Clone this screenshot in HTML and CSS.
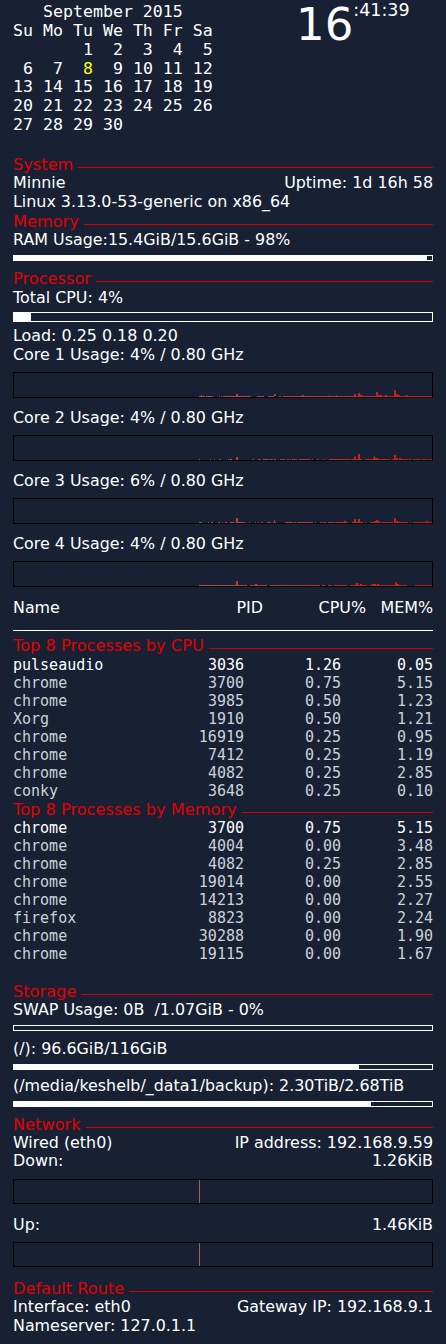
FILE: index.html
```html
<!DOCTYPE html>
<html>
<head>
<meta charset="utf-8">
<link rel="stylesheet" href="styles.css">
</head>
<body>
<div class="panel">
  <header class="top">
<pre class="cal">   September 2015
Su Mo Tu We Th Fr Sa
       1  2  3  4  5
 6  7  <span class="today">8</span>  9 10 11 12
13 14 15 16 17 18 19
20 21 22 23 24 25 26
27 28 29 30</pre>
    <div class="clock"><span class="hh">16</span><span class="ms">:41:39</span></div>
  </header>

  <h2 class="sec first">System</h2>
  <div class="row"><span>Minnie</span><span>Uptime: 1d 16h 58</span></div>
  <div class="ln">Linux 3.13.0-53-generic on x86_64</div>

  <h2 class="sec">Memory</h2>
  <div class="ln">RAM Usage:15.4GiB/15.6GiB - 98%</div>
  <div class="bar ram"><div class="fill" style="width:98.7%"></div></div>

  <h2 class="sec proc">Processor</h2>
  <div class="ln total">Total CPU: 4%</div>
  <div class="bar tall"><div class="fill" style="width:4%"></div></div>
  <div class="ln load">Load: 0.25 0.18 0.20</div>

  <div class="ln">Core 1 Usage: 4% / 0.80 GHz</div>
  <div class="graph">
    <svg viewBox="0 0 418 24" preserveAspectRatio="none" shape-rendering="crispEdges">
      <defs><linearGradient id="g" gradientUnits="userSpaceOnUse" x1="185" y1="0" x2="418" y2="0"><stop offset="0" stop-color="#b34a4a"/><stop offset="1" stop-color="#cc1414"/></linearGradient></defs>
      <path fill="url(#g)" d="M185 23h6v1h-6zM192 23h7v1h-7zM205 23h1v1h-1zM207 23h1v1h-1zM209 23h28v1h-28zM243 23h7v1h-7zM254 23h6v1h-6zM265 23h2v1h-2zM269 23h149v1h-149zM187 22h1v1h-1zM222 21h2v2h-2zM260 21h2v2h-2zM288 22h2v1h-2zM315 22h1v1h-1zM322 22h1v1h-1zM340 21h2v2h-2zM344 20h2v3h-2zM346 22h2v1h-2zM362 19h2v4h-2zM364 22h4v1h-4zM371 22h2v1h-2zM380 17h2v6h-2zM382 21h2v2h-2zM384 22h2v1h-2zM392 22h2v1h-2z"/>
    </svg>
  </div>

  <div class="ln after-graph">Core 2 Usage: 4% / 0.80 GHz</div>
  <div class="graph">
    <svg viewBox="0 0 418 24" preserveAspectRatio="none" shape-rendering="crispEdges">
      <path fill="url(#g)" d="M185 23h1v1h-1zM196 23h1v1h-1zM200 23h1v1h-1zM205 23h2v1h-2zM214 23h1v1h-1zM216 23h2v1h-2zM222 21h2v3h-2zM238 23h2v1h-2zM244 23h3v1h-3zM249 23h6v1h-6zM256 23h3v1h-3zM260 23h2v1h-2zM266 23h5v1h-5zM273 23h2v1h-2zM276 23h1v1h-1zM278 23h5v1h-5zM285 23h11v1h-11zM298 23h1v1h-1zM303 23h2v1h-2zM307 23h1v1h-1zM309 23h2v1h-2zM315 23h21v1h-21zM337 23h11v1h-11zM340 21h2v2h-2zM341 20h1v1h-1zM344 18h2v5h-2zM351 23h8v1h-8zM359 22h5v2h-5zM360 20h1v2h-1zM364 23h2v1h-2zM366 23h10v1h-10zM378 23h2v1h-2zM380 19h2v5h-2zM382 22h2v2h-2zM385 22h2v2h-2zM387 23h7v1h-7zM395 23h2v1h-2zM399 23h7v1h-7zM408 23h6v1h-6zM415 23h3v1h-3z"/>
    </svg>
  </div>

  <div class="ln after-graph">Core 3 Usage: 6% / 0.80 GHz</div>
  <div class="graph">
    <svg viewBox="0 0 418 24" preserveAspectRatio="none" shape-rendering="crispEdges">
      <path fill="url(#g)" d="M185 23h3v1h-3zM194 23h1v1h-1zM197 23h2v1h-2zM204 23h2v1h-2zM208 23h1v1h-1zM211 23h2v1h-2zM216 23h4v1h-4zM222 19h2v5h-2zM224 23h7v1h-7zM235 23h1v1h-1zM241 23h1v1h-1zM244 23h1v1h-1zM247 23h2v1h-2zM253 23h4v1h-4zM259 23h3v1h-3zM260 21h1v2h-1zM271 23h8v1h-8zM280 23h2v1h-2zM283 23h16v1h-16zM301 23h1v1h-1zM306 23h2v1h-2zM309 23h3v1h-3zM314 23h6v1h-6zM321 23h13v1h-13zM330 22h2v1h-2zM338 23h11v1h-11zM340 20h2v3h-2zM344 20h2v3h-2zM351 23h1v1h-1zM356 23h4v1h-4zM360 22h6v2h-6zM362 21h2v1h-2zM367 23h10v1h-10zM377 23h2v1h-2zM380 19h2v5h-2zM382 22h2v2h-2zM384 23h10v1h-10zM396 23h1v1h-1zM399 23h19v1h-19zM412 22h2v1h-2z"/>
    </svg>
  </div>

  <div class="ln after-graph">Core 4 Usage: 4% / 0.80 GHz</div>
  <div class="graph">
    <svg viewBox="0 0 418 24" preserveAspectRatio="none" shape-rendering="crispEdges">
      <path fill="url(#g)" d="M185 23h48v1h-48zM222 19h2v4h-2zM236 23h17v1h-17zM241 22h2v1h-2zM256 23h50v1h-50zM308 23h3v1h-3zM314 23h4v1h-4zM320 23h13v1h-13zM336 23h17v1h-17zM342 21h2v2h-2zM346 22h2v1h-2zM356 23h37v1h-37zM358 22h4v1h-4zM363 22h2v1h-2zM381 20h2v3h-2zM383 22h2v1h-2zM401 23h17v1h-17z"/>
    </svg>
  </div>

  <div class="thead after-graph2">
    <span>Name</span><span class="r">PID</span><span class="r">CPU%</span><span class="r">MEM%</span>
  </div>
  <div class="hr"></div>

  <h2 class="sec top8">Top 8 Processes by CPU</h2>
  <div class="procs">
    <div class="pr hi"><span>pulseaudio</span><span>3036</span><span>1.26</span><span>0.05</span></div>
    <div class="pr"><span>chrome</span><span>3700</span><span>0.75</span><span>5.15</span></div>
    <div class="pr"><span>chrome</span><span>3985</span><span>0.50</span><span>1.23</span></div>
    <div class="pr"><span>Xorg</span><span>1910</span><span>0.50</span><span>1.21</span></div>
    <div class="pr"><span>chrome</span><span>16919</span><span>0.25</span><span>0.95</span></div>
    <div class="pr"><span>chrome</span><span>7412</span><span>0.25</span><span>1.19</span></div>
    <div class="pr"><span>chrome</span><span>4082</span><span>0.25</span><span>2.85</span></div>
    <div class="pr"><span>conky</span><span>3648</span><span>0.25</span><span>0.10</span></div>
  </div>

  <h2 class="sec">Top 8 Processes by Memory</h2>
  <div class="procs mem">
    <div class="pr hi"><span>chrome</span><span>3700</span><span>0.75</span><span>5.15</span></div>
    <div class="pr"><span>chrome</span><span>4004</span><span>0.00</span><span>3.48</span></div>
    <div class="pr"><span>chrome</span><span>4082</span><span>0.25</span><span>2.85</span></div>
    <div class="pr"><span>chrome</span><span>19014</span><span>0.00</span><span>2.55</span></div>
    <div class="pr"><span>chrome</span><span>14213</span><span>0.00</span><span>2.27</span></div>
    <div class="pr"><span>firefox</span><span>8823</span><span>0.00</span><span>2.24</span></div>
    <div class="pr"><span>chrome</span><span>30288</span><span>0.00</span><span>1.90</span></div>
    <div class="pr"><span>chrome</span><span>19115</span><span>0.00</span><span>1.67</span></div>
  </div>

  <h2 class="sec storage">Storage</h2>
  <div class="ln">SWAP Usage: 0B&nbsp; /1.07GiB - 0%</div>
  <div class="bar"><div class="fill" style="width:0%"></div></div>
  <div class="ln after-bar2">(/): 96.6GiB/116GiB</div>
  <div class="bar"><div class="fill" style="width:82.5%"></div></div>
  <div class="ln after-bar">(/media/keshelb/_data1/backup): 2.30TiB/2.68TiB</div>
  <div class="bar"><div class="fill" style="width:85.4%"></div></div>

  <h2 class="sec after-bar">Network</h2>
  <div class="row"><span>Wired (eth0)</span><span>IP address: 192.168.9.59</span></div>
  <div class="row"><span>Down:</span><span>1.26KiB</span></div>
  <div class="graph net">
    <svg viewBox="0 0 418 23" preserveAspectRatio="none" shape-rendering="crispEdges"><path fill="#a8605a" d="M185 0h1v23h-1z"/></svg>
  </div>
  <div class="row after-graph2"><span>Up:</span><span>1.46KiB</span></div>
  <div class="graph net">
    <svg viewBox="0 0 418 23" preserveAspectRatio="none" shape-rendering="crispEdges"><path fill="#a8605a" d="M185 0h1v23h-1z"/></svg>
  </div>

  <h2 class="sec after-graph2">Default Route</h2>
  <div class="row"><span>Interface: eth0</span><span>Gateway IP: 192.168.9.1</span></div>
  <div class="ln">Nameserver: 127.0.1.1</div>
</div>
</body>
</html>
```

FILE: styles.css
```css
* { box-sizing: border-box; }
html, body { margin: 0; padding: 0; }
body {
  background: #172133;
  color: #ffffff;
  font-family: "DejaVu Sans", "Liberation Sans", sans-serif;
  font-size: 15.9px;
  width: 446px;
  min-height: 1344px;
}
.panel { padding: 0 13px; }

.top { display: flex; align-items: flex-start; height: 134.9px; }
.cal {
  margin: 0;
  padding-top: 3.3px;
  width: 200px;
  font-family: "DejaVu Sans Mono", "Liberation Mono", monospace;
  font-size: 16.6px;
  line-height: 18.8px;
  color: #ffffff;
}
.today { color: #ffff00; }
.clock { display: flex; align-items: flex-start; margin-left: 83px; padding-top: 1px; }
.hh { font-size: 45px; line-height: 1.05; }
.ms { font-size: 17.5px; line-height: 1.1; }

.sec {
  display: flex;
  align-items: flex-start;
  margin: 0;
  font-size: 16.2px;
  font-weight: normal;
  line-height: 19px;
  color: #e20000;
}
.sec::after {
  content: "";
  flex: 1;
  height: 1px;
  margin: 12px 0 0 5px;
  background: #d40000;
}
.sec.first { margin-top: 20.6px; }
.sec.proc { margin-top: 8.6px; }
.sec.top8 { margin-top: 5px; }
.sec.storage { margin-top: 18.4px; }

.ln { line-height: 18.7px; }
.row { display: flex; justify-content: space-between; line-height: 18.7px; }
.total { margin-top: 1px; }

.bar { height: 6px; margin-top: 5.2px; border: 1px solid #ffffff; }
.bar.tall { height: 10px; margin-top: 3.5px; }
.bar .fill { height: 100%; background: #ffffff; }
.after-bar { margin-top: 7.6px; }
.after-bar2 { margin-top: 9px; }
.load { margin-top: 5.6px; }

.graph { height: 26px; margin-top: 7.7px; border: 1px solid #000000; }
.graph.net { height: 25px; }
.graph svg { display: block; width: 100%; height: 100%; }
.after-graph { margin-top: 10.6px; }
.after-graph2 { margin-top: 12px; }

.thead {
  display: grid;
  grid-template-columns: 200px 50px 103px 67px;
  line-height: 18.7px;
}
.r { text-align: right; }
.hr { height: 1px; margin-top: 12px; background: #ffffff; }

.procs {
  margin-top: 1px;
  font-family: "DejaVu Sans Mono", "Liberation Mono", monospace;
  font-size: 15px;
  line-height: 18px;
  color: #cdd1d8;
}
.procs.mem { margin-top: 0.5px; }
.pr { display: grid; grid-template-columns: 181px 50px 97px 92px; }
.pr span:not(:first-child) { text-align: right; }
.pr.hi { color: #ffffff; }
```
